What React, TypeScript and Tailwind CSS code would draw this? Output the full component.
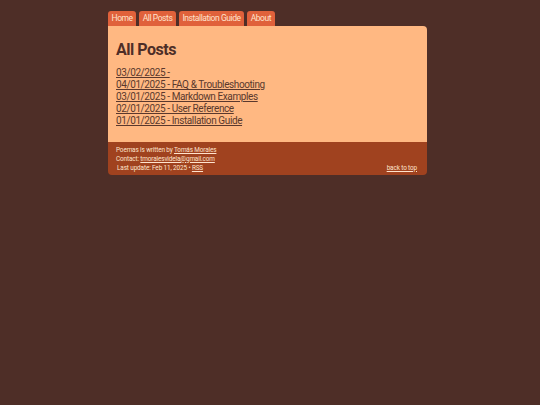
export default function App() {
    const tabs = ["Home", "All Posts", "Installation Guide", "About"];
    const posts = [
        "03/02/2025 - ",
        "04/01/2025 - FAQ & Troubleshooting",
        "03/01/2025 - Markdown Examples",
        "02/01/2025 - User Reference",
        "01/01/2025 - Installation Guide",
    ];

    return (
        <div className="min-h-[405px] bg-[#4e2e27] pt-[11px] pl-[108px] font-['Roboto',sans-serif]">
            <div className="w-[319px]">
                {/* Tabs */}
                <nav className="flex gap-[3px]">
                    {tabs.map((t) => (
                        <a
                            key={t}
                            href="#"
                            className="h-[15px] px-[3.5px] flex items-center rounded-t-[3px] bg-[#e0613b] text-[#ffe3cc] text-[8.5px] tracking-[-0.05em] leading-none"
                        >
                            {t}
                        </a>
                    ))}
                </nav>

                {/* Card */}
                <div className="rounded-[4px] rounded-tl-none overflow-hidden">
                    <main className="bg-[#ffb882] px-[8px] pt-[14px] h-[116px] text-[#4e2e27]">
                        <h1 className="text-[16px] font-bold leading-[20px] tracking-[-0.03em]">All Posts</h1>
                        <ul className="mt-[7px] text-[#5a382d]">
                            {posts.map((p) => (
                                <li key={p} className="leading-[12px] text-[10px] tracking-[-0.04em]">
                                    <a href="#" className="underline">{p}</a>
                                </li>
                            ))}
                        </ul>
                    </main>
                    <footer className="bg-[#a0421f] text-[#ffe3cc] text-[6.4px] tracking-[-0.02em] leading-[9px] px-[8px] pt-[3.5px] h-[33px]">
                        <p>Poemas is written by <a href="#" className="underline">Tomás Morales</a></p>
                        <p>Contact: <a href="#" className="underline">tmoralesvidela@gmail.com</a></p>
                        <div className="flex justify-between pl-[1px] pr-[2px]">
                            <p>Last update: Feb 11, 2025 • <a href="#" className="underline">RSS</a></p>
                            <a href="#" className="underline">back to top</a>
                        </div>
                    </footer>
                </div>
            </div>
        </div>
    );
}
